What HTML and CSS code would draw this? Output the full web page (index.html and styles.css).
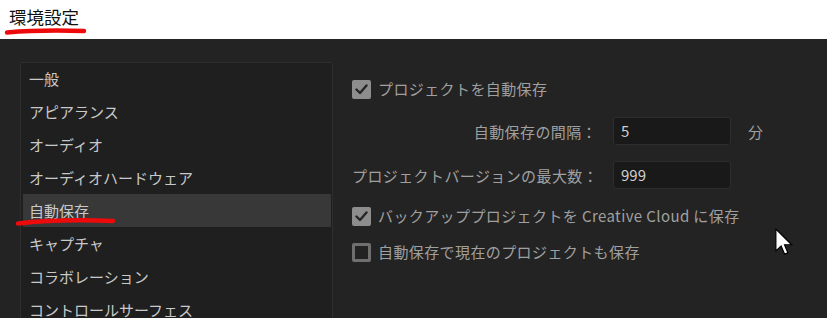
FILE: index.html
```html
<!DOCTYPE html>
<html lang="ja">
<head>
    <meta charset="UTF-8">
    <title>環境設定</title>
    <link rel="stylesheet" href="styles.css">
</head>
<body>
    <header class="titlebar">
        <h1 class="title">環境設定</h1>
        <svg class="mark mark-title" width="84" height="10" viewBox="0 0 84 10">
            <path d="M3 6.5 C 20 5, 50 4, 80 5" />
        </svg>
    </header>

    <main class="prefs">
        <ul class="nav">
            <li class="nav-item">一般</li>
            <li class="nav-item">アピアランス</li>
            <li class="nav-item">オーディオ</li>
            <li class="nav-item">オーディオハードウェア</li>
            <li class="nav-item active">
                自動保存
                <svg class="mark mark-nav" width="102" height="10" viewBox="0 0 102 10">
                    <path d="M3 6.5 C 25 4, 60 2.5, 98 4" />
                </svg>
            </li>
            <li class="nav-item">キャプチャ</li>
            <li class="nav-item">コラボレーション</li>
            <li class="nav-item">コントロールサーフェス</li>
        </ul>

        <section class="options">
            <label class="check-row">
                <span class="box checked">
                    <svg width="13" height="11" viewBox="0 0 13 11"><path d="M1.5 5.5 L5 9 L11.5 1.5" /></svg>
                </span>
                <span class="check-label">プロジェクトを自動保存</span>
            </label>

            <div class="fields">
                <span class="field-label">自動保存の間隔：</span>
                <div class="input">5</div>
                <span class="unit">分</span>

                <span class="field-label">プロジェクトバージョンの最大数：</span>
                <div class="input">999</div>
                <span></span>
            </div>

            <label class="check-row row-backup">
                <span class="box checked">
                    <svg width="13" height="11" viewBox="0 0 13 11"><path d="M1.5 5.5 L5 9 L11.5 1.5" /></svg>
                </span>
                <span class="check-label">バックアッププロジェクトを Creative Cloud に保存</span>
            </label>

            <label class="check-row row-current">
                <span class="box"></span>
                <span class="check-label">自動保存で現在のプロジェクトも保存</span>
            </label>
        </section>

        <svg class="cursor" width="19" height="28" viewBox="0 0 13 19">
            <path d="M0.6 0.6 V15.6 L4.2 12.2 L6.6 17.8 L8.8 16.9 L6.5 11.4 H11.4 Z" />
        </svg>
    </main>
</body>
</html>
```

FILE: styles.css
```css
:root {
    --bg: #232323;
    --panel-bg: #1f1f1f;
    --panel-border: #2e2e2e;
    --selected: #383838;
    --text-list: #c9c9c9;
    --text-label: #a0a0a0;
    --input-bg: #191919;
    --input-border: #2d2d2d;
    --mark-red: #ee0a0a;
}

* {
    margin: 0;
    padding: 0;
    box-sizing: border-box;
}

body {
    width: 827px;
    height: 318px;
    overflow: hidden;
    font-family: "Noto Sans CJK JP", "Noto Sans", sans-serif;
    background-color: var(--bg);
}

/* Заголовок окна */
.titlebar {
    position: relative;
    height: 39px;
    background: #ffffff;
    padding-left: 9px;
    display: flex;
    align-items: center;
}

.title {
    font-size: 17.5px;
    font-weight: 400;
    color: #111;
    line-height: 1;
    margin-top: -5px;
}

/* красные пометки поверх интерфейса */
.mark {
    position: absolute;
    fill: none;
    stroke: var(--mark-red);
    stroke-width: 4.5;
    stroke-linecap: round;
}

.mark-title {
    left: 4px;
    top: 26px;
}

.mark-nav {
    left: -8px;
    top: 23px;
}

.prefs {
    position: relative;
    display: flex;
    gap: 19px;
    padding: 23px 0 0 20px;
    height: 279px;
    overflow: hidden;
}

.nav {
    list-style: none;
    flex-shrink: 0;
    width: 313px;
    height: 280px;
    background: var(--panel-bg);
    border: 1px solid var(--panel-border);
    border-radius: 2px;
    padding: 0 1px 0 2px;
}

.nav-item {
    position: relative;
    height: 33px;
    line-height: 33px;
    padding-left: 6px;
    font-size: 15px;
    color: var(--text-list);
    white-space: nowrap;
}

.nav-item:first-child {
    height: 32px;
    line-height: 32px;
}

.nav-item.active {
    background: var(--selected);
}

.options {
    padding-top: 17px;
    display: flex;
    flex-direction: column;
    color: var(--text-label);
    font-size: 15px;
    letter-spacing: 0.4px;
}

.check-row {
    display: flex;
    align-items: center;
    gap: 7px;
    height: 20px;
}

.box {
    width: 19px;
    height: 19px;
    border-radius: 2px;
    border: 3px solid #6f6f6f;
    display: flex;
    align-items: center;
    justify-content: center;
}

.box.checked {
    background: #8d8d8d;
    border: none;
}

.box svg path {
    fill: none;
    stroke: #262626;
    stroke-width: 2.4;
    stroke-linecap: round;
    stroke-linejoin: round;
}

.check-label {
    white-space: nowrap;
    line-height: 20px;
}

.fields {
    display: grid;
    grid-template-columns: 245px 118px auto;
    column-gap: 16px;
    row-gap: 16px;
    align-items: center;
    margin-top: 18px;
}

.field-label {
    text-align: right;
    white-space: nowrap;
}

.input {
    height: 28px;
    background: var(--input-bg);
    border: 1px solid var(--input-border);
    border-radius: 3px;
    padding-left: 7px;
    line-height: 26px;
    color: #cfcfcf;
    font-size: 15px;
    letter-spacing: 0;
}

.unit {
    padding-left: 1px;
}

.row-backup {
    margin-top: 17px;
}

.row-current {
    margin-top: 16px;
}

.cursor {
    position: absolute;
    left: 775px;
    top: 189px;
}

.cursor path {
    fill: #fff;
    stroke: #000;
    stroke-width: 0.8;
    stroke-linejoin: miter;
}
```
